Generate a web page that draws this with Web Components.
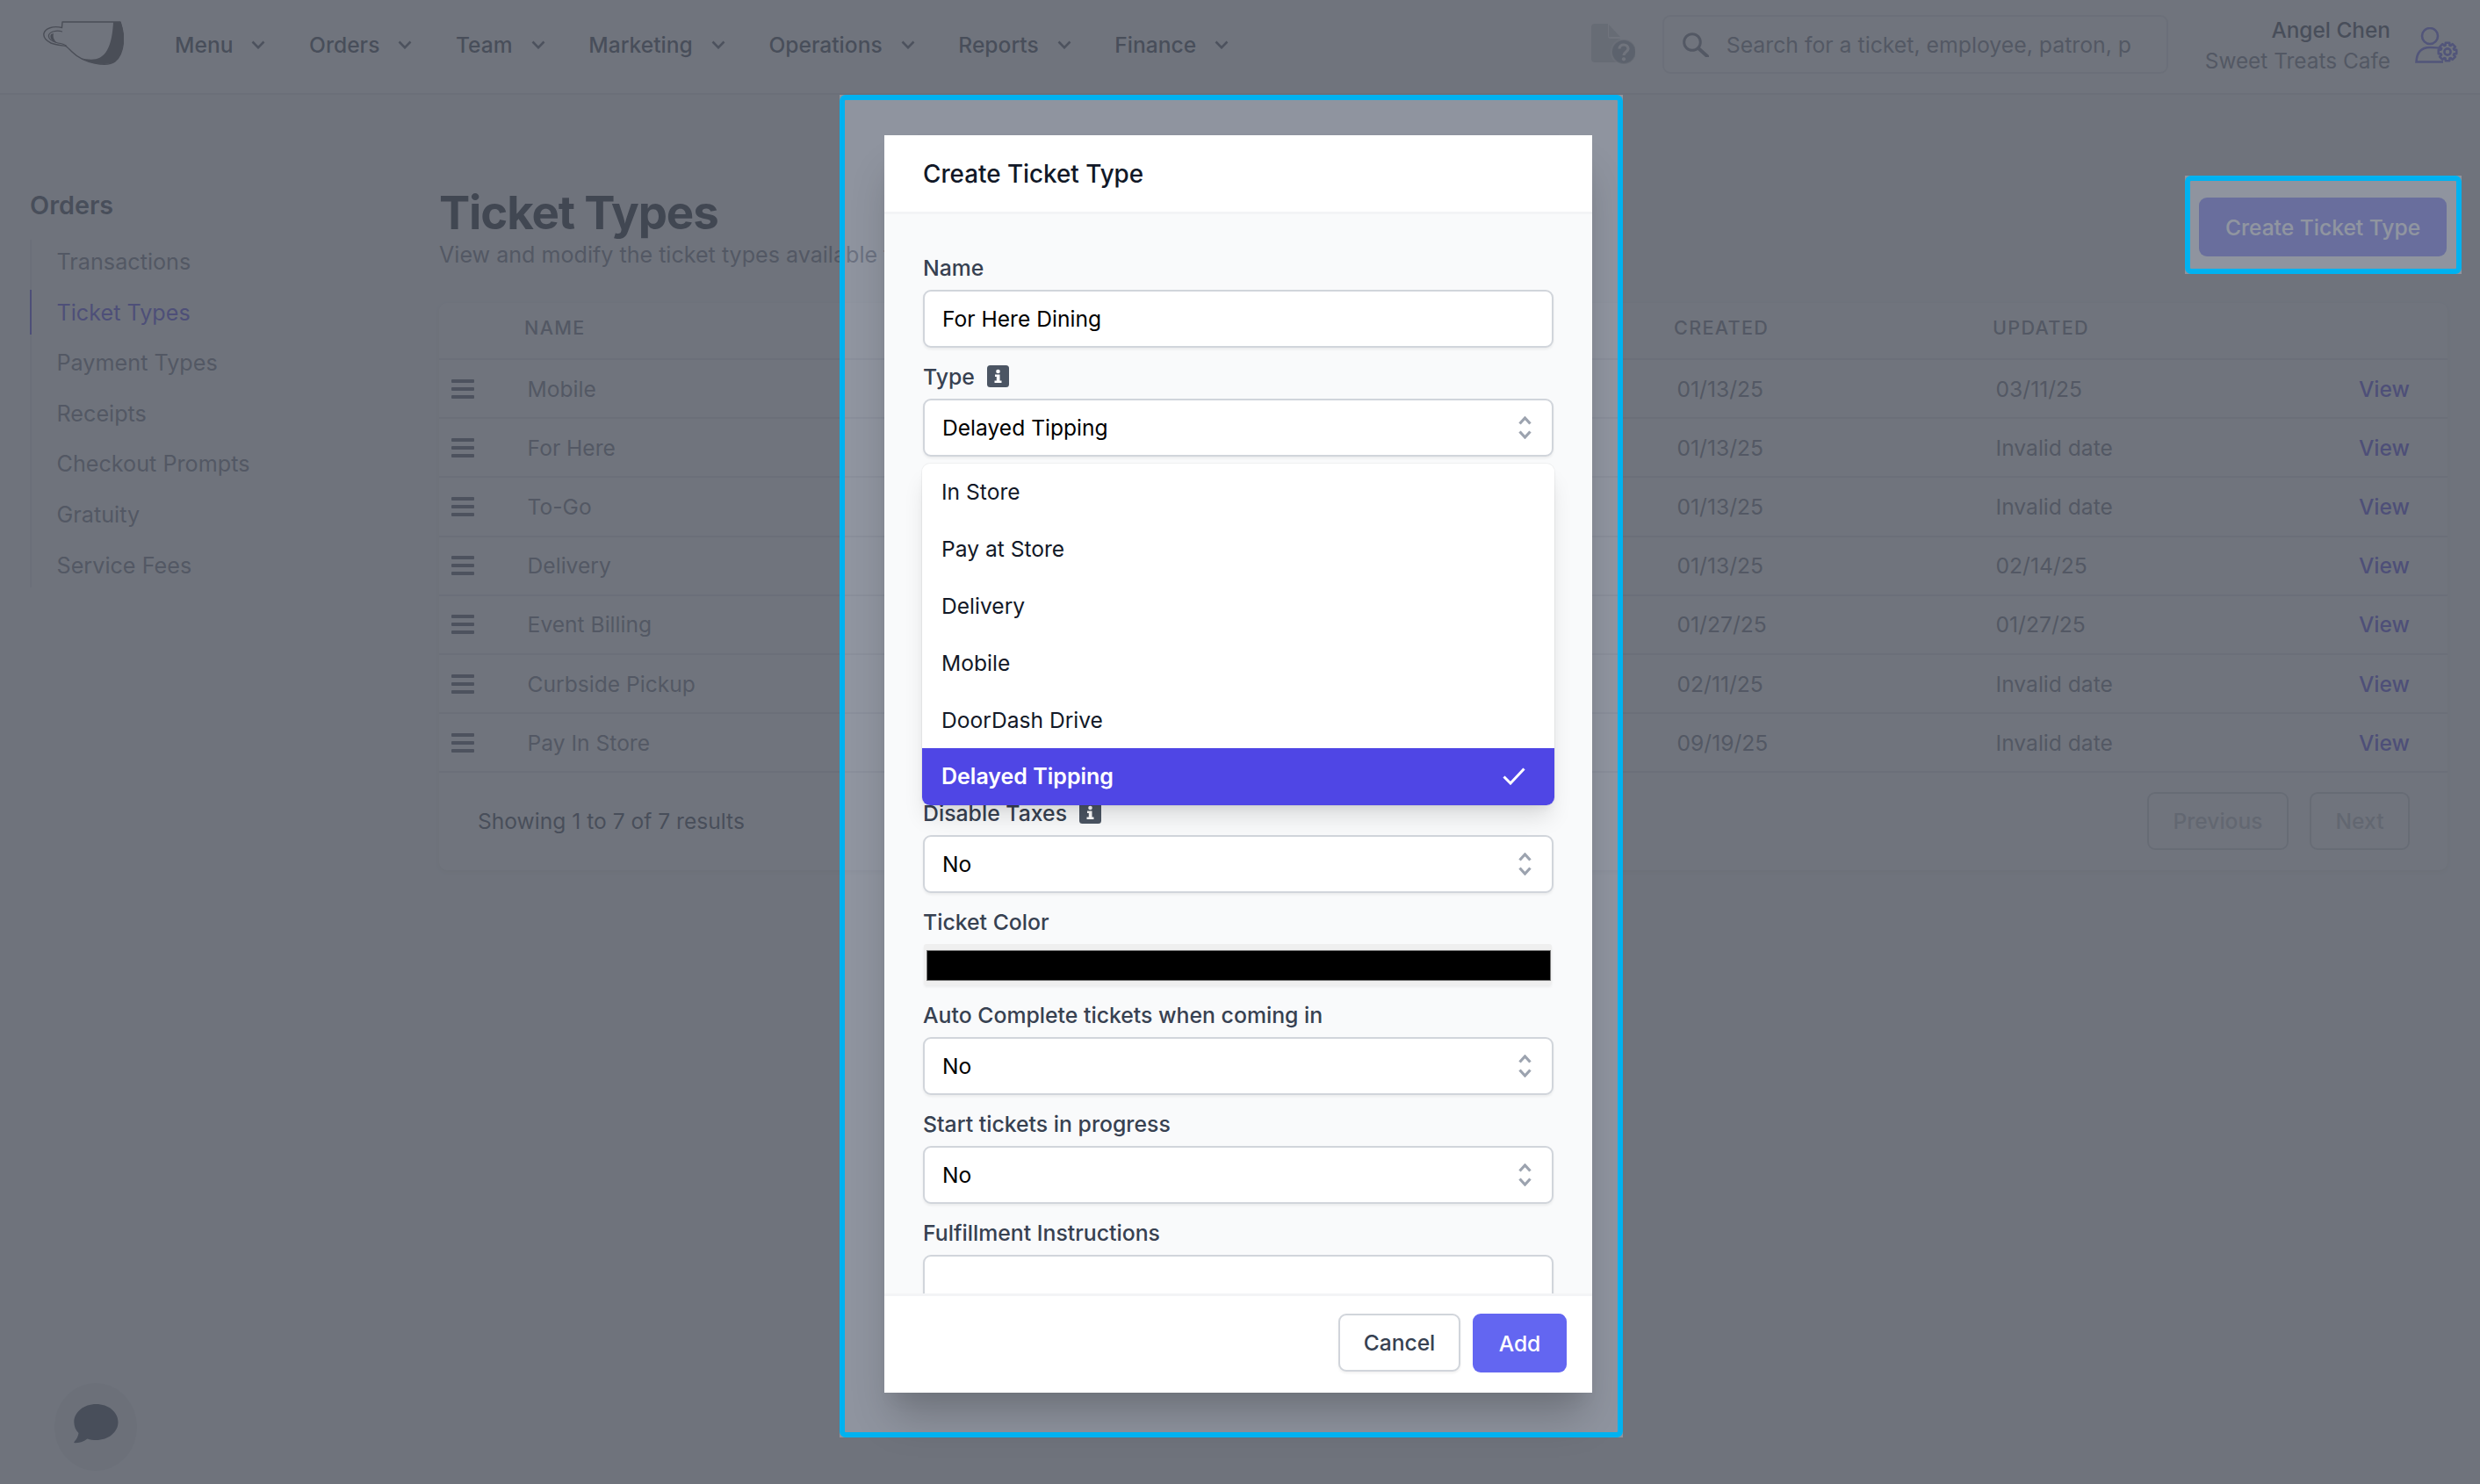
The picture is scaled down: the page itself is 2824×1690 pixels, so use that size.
<!DOCTYPE html>
<html lang="en">
<head>
<meta charset="utf-8">
<title>Ticket Types</title>
<style>
html,body{margin:0;padding:0;width:2824px;height:1690px;overflow:hidden;background:#f9fafb;font-family:Inter,"Liberation Sans",sans-serif;font-size:24.6px;}
</style>
</head>
<body>
<app-shell></app-shell>
<script>
const define=(name,html,extra={})=>{
  class C extends HTMLElement{
    constructor(){super();this.attachShadow({mode:'open'}).innerHTML=html;}
    connectedCallback(){
      if(extra.render) extra.render.call(this,this.shadowRoot);
    }
  }
  customElements.define(name,C);
};
function gear(cx,cy,ro,ri,n){
  let d='';
  for(let i=0;i<n;i++){
    const a=i*2*Math.PI/n, w=Math.PI/n*0.55, b=Math.PI/n*0.8;
    const p=[[ri,a-b],[ro,a-w],[ro,a+w],[ri,a+b]];
    p.forEach((q,j)=>{
      const x=(cx+q[0]*Math.cos(q[1])).toFixed(2), y=(cy+q[0]*Math.sin(q[1])).toFixed(2);
      d+=(i===0&&j===0?'M':'L')+x+' '+y+' ';
    });
  }
  return d+'Z';
}

define('nav-item',`<style>
:host{display:flex;align-items:center;gap:21px;font-weight:500;color:#374151;font-size:24.6px;line-height:36px;white-space:nowrap}
svg{width:16px;height:10px;display:block;margin-top:1px}
</style><slot></slot><svg viewBox="0 0 16 10"><path d="M1.5 1.5 8 8.2l6.5-6.7" fill="none" stroke="#4b5563" stroke-width="2.6"/></svg>`);

define('brand-logo',`<style>:host{display:block;width:92px;height:50px}svg{display:block}</style>
<svg width="92" height="50" viewBox="49 25 92 50">
<path d="M71 26H137C139 32 141 40 140.6 47 140 58 137 66 131 71 127 74 118 75 108 73 98 71 88 66 82 60 79 57 77 55 75 53.5 69 52.5 63 52 58 50 52 47 49 44 50 39 51.5 33.5 60 30 70.5 32.5Z" fill="none" stroke="#3f3d42" stroke-width="1.4" stroke-linejoin="round"/>
<path d="M129 26H137.5C139.5 32 141 40 140.6 47 140 58 137 66 131 71 127 74 118 75 108 73 103 72 97 70 92 67 100 69 108 69.5 114 66.5 124 61 128 46 129 26Z" fill="#3f3d42"/>
<path d="M71 37C64 35 57 37 55.5 41 54.5 45 60 49 66 50 72 51 74 52 75.5 53" fill="none" stroke="#3f3d42" stroke-width="1.2"/>
<path d="M58 40C56 44 59 48 65 50 61 46 60 43 61 39Z" fill="#3f3d42"/>
</svg>`);

define('help-icon',`<style>:host{display:block;width:50px;height:46px}svg{display:block}</style>
<svg width="50" height="46" viewBox="0 0 50 46">
<path d="M4 0H19V14C19 16 20 17 22 17H33V40C33 42.5 31 44 29 44H4C1.5 44 0 42.5 0 40V4C0 1.5 1.5 0 4 0Z" fill="#d1d5db"/>
<path d="M20 1 33 15H20Z" fill="#d1d5db"/>
<circle cx="37" cy="32" r="14" fill="#9ca3af" stroke="#fff" stroke-opacity=".55" stroke-width="2"/>
<path d="M32 28.5C32 25.5 34.5 24 37 24 40 24 42 26 42 28.5 42 32 37 32 37 36" fill="none" stroke="#fff" stroke-width="3.2"/>
<circle cx="37" cy="40.3" r="2.1" fill="#fff"/>
</svg>`);

define('search-box',`<style>
:host{display:flex;align-items:center;width:576px;height:67px;box-sizing:border-box;border:2px solid #e5e7eb;border-radius:9px;background:#fff;padding-left:21px;gap:20px;overflow:hidden}
svg{flex:none;display:block}
span{color:#6b7280;font-size:24.8px;white-space:nowrap;line-height:36px}
</style>
<svg width="30" height="28" viewBox="0 0 30 28"><circle cx="11" cy="11" r="9.3" fill="none" stroke="#6b7280" stroke-width="3"/><path d="M18 18 28 27" stroke="#6b7280" stroke-width="4" stroke-linecap="round"/></svg>
<span>Search for a ticket, employee, patron, p</span>`);

define('user-menu',`<style>
:host{display:flex;align-items:center;gap:28px;margin-top:2px}
.t{display:flex;flex-direction:column;align-items:flex-end;line-height:35px;font-size:24.4px;white-space:nowrap}
.n{color:#374151;font-weight:500}
.c{color:#6b7280}
svg{display:block}
</style>
<div class="t"><span class="n">Angel Chen</span><span class="c">Sweet Treats Cafe</span></div>
<svg width="50" height="42" viewBox="0 0 50 42" fill="none" stroke="#6366f1" stroke-width="2.6">
<circle cx="17" cy="10" r="9"/>
<path d="M31 24.5C27 23.3 23 23 17 23 8 23 2 28 1.5 39.5H32"/>
<path id="g" stroke-linejoin="round"/>
<circle cx="37" cy="28" r="3.6"/>
</svg>`,{render(r){r.getElementById('g').setAttribute('d',gear(37,28,10.5,7.8,8));}});

define('app-header',`<style>
:host{display:flex;align-items:center;box-sizing:border-box;height:108px;background:#fff;border-bottom:2px solid #e5e7eb;padding:0 24px 5px 49px;flex:none}
brand-logo{margin-top:-4px}
nav{display:flex;gap:49.6px;margin-left:58px}
.r{margin-left:auto;display:flex;align-items:center}
help-icon{margin-right:31px;margin-top:-1px}
search-box{margin-right:42px}
</style>
<brand-logo></brand-logo>
<nav><nav-item>Menu</nav-item><nav-item>Orders</nav-item><nav-item>Team</nav-item><nav-item>Marketing</nav-item><nav-item>Operations</nav-item><nav-item>Reports</nav-item><nav-item>Finance</nav-item></nav>
<div class="r"><help-icon></help-icon><search-box></search-box><user-menu></user-menu></div>`);

define('side-link',`<style>
:host{display:flex;align-items:center;height:51px;padding-left:29px;margin-left:-2.5px;border-left:2.5px solid transparent;color:#6b7280;font-size:25.2px;white-space:nowrap}
:host([active]){color:#4f46e5;border-left-color:#4f46e5}
</style><slot></slot>`);

define('side-bar',`<style>
:host{display:block;width:466px;padding:103px 0 0 34px;flex:none}
h2{margin:0 0 15.5px;font-size:28.8px;line-height:46px;font-weight:600;color:#374151}
.l{display:flex;flex-direction:column;gap:6.6px;border-left:2.5px solid #e5e7eb}
</style>
<h2>Orders</h2>
<div class="l">
<side-link>Transactions</side-link><side-link active>Ticket Types</side-link><side-link>Payment Types</side-link><side-link>Receipts</side-link><side-link>Checkout Prompts</side-link><side-link>Gratuity</side-link><side-link>Service Fees</side-link>
</div>`);

define('prim-button',`<style>
:host{display:flex;align-items:center;justify-content:center;box-sizing:border-box;height:67px;border-radius:9px;background:#6366f1;color:#fff;font-weight:500;font-size:24.6px;white-space:nowrap}
:host([light]){background:#fff;color:#374151;border:2px solid #d1d5db;box-shadow:0 2px 3px rgba(0,0,0,.06)}
:host([off]){background:#fff;color:#374151;border:2px solid #d1d5db}
:host([off]) ::slotted(*){opacity:.35}
</style><slot></slot>`);

const COLS='grid-template-columns:97px 1309px 363px 1fr';
define('table-head',`<style>
:host{display:grid;${COLS};align-items:center;height:65px;box-sizing:border-box;padding-bottom:8px;border-bottom:2px solid #e5e7eb;font-size:21.6px;font-weight:500;letter-spacing:1.3px;color:#6b7280}
div:empty{height:1px}
</style><div></div><div>NAME</div><div>CREATED</div><div>UPDATED</div>`);

define('table-row',`<style>
:host{display:grid;${COLS};align-items:center;height:67.2px;box-sizing:border-box;border-bottom:2px solid #e5e7eb;font-size:24.6px;color:#6b7280}
.h{padding-left:14px;height:22px}
.h svg{display:block}
.c{padding-left:3.6px;white-space:nowrap}
.v{display:flex;justify-content:flex-end;padding-right:43px;color:#4f46e5;font-weight:500}
</style>
<div class="h"><svg width="26" height="22" viewBox="0 0 26 22" fill="#4b5563"><rect width="26" height="4" y="0" rx="1"/><rect width="26" height="4" y="9" rx="1"/><rect width="26" height="4" y="18" rx="1"/></svg></div>
<div class="c" id="a"></div><div class="c" id="b"></div>
<div style="display:grid;grid-template-columns:1fr auto"><div class="c" id="d"></div><div class="v">View</div></div>`,{render(r){
  r.getElementById('a').textContent=this.getAttribute('name');
  r.getElementById('b').textContent=this.getAttribute('created');
  r.getElementById('d').textContent=this.getAttribute('updated');
}});

define('table-card',`<style>
:host{display:block;background:#fff;border-radius:9px;box-shadow:0 2px 5px rgba(0,0,0,.08);height:646px;overflow:hidden}
.f{display:flex;align-items:center;justify-content:space-between;height:109px;padding:0 43px 0 44px;font-size:24.6px;color:#374151}
.b{display:flex;gap:24px}
prim-button{height:66px}
.p{width:161px}.n{width:114px}
</style>
<table-head></table-head>
<table-row name="Mobile" created="01/13/25" updated="03/11/25"></table-row>
<table-row name="For Here" created="01/13/25" updated="Invalid date"></table-row>
<table-row name="To-Go" created="01/13/25" updated="Invalid date"></table-row>
<table-row name="Delivery" created="01/13/25" updated="02/14/25"></table-row>
<table-row name="Event Billing" created="01/27/25" updated="01/27/25"></table-row>
<table-row name="Curbside Pickup" created="02/11/25" updated="Invalid date"></table-row>
<table-row name="Pay In Store" created="09/19/25" updated="Invalid date"></table-row>
<div class="f"><span>Showing 1 to 7 of 7 results</span>
<div class="b"><prim-button off class="p"><span>Previous</span></prim-button><prim-button off class="n"><span>Next</span></prim-button></div></div>`);

define('main-panel',`<style>
:host{display:block;flex:1;padding:102px 37px 0 0;min-width:0}
.top{display:flex;justify-content:space-between;height:100px;margin-bottom:35px}
h1{margin:0;font-size:52.8px;letter-spacing:-1.15px;line-height:64.8px;font-weight:700;color:#111827}
p{margin:0;font-size:25.1px;line-height:36px;color:#6b7280;margin-top:-3px}
prim-button{width:282px;margin-top:15px;margin-right:1px}
</style>
<div class="top"><div><h1>Ticket Types</h1><p>View and modify the ticket types available to</p></div><prim-button>Create Ticket Type</prim-button></div>
<table-card></table-card>`);

define('chat-bubble',`<style>
:host{position:absolute;left:62px;top:1575px;width:94px;height:100px;border-radius:50%;background:#e9ebef;display:block}
svg{position:absolute;left:22px;top:24px}
</style>
<svg width="51" height="45" viewBox="0 0 51 45"><path d="M25.5 0C39.5 0 50.5 9 50.5 20.5 50.5 32 39.5 41 25.5 41 22 41 18.5 40.5 15.5 39.5 11 43 5 44.5 1 44.3 .2 44.2 0 43.5 .5 43 3 40 5 37 5.5 33 2 29.5 .3 25 .3 20.5 .3 9 11.5 0 25.5 0Z" fill="#374151"/></svg>`);

define('field-label',`<style>
:host{display:flex;align-items:center;gap:14px;height:36px;margin-bottom:7px;font-size:24.8px;font-weight:500;color:#374151;white-space:nowrap}
</style><slot></slot>`);

define('info-badge',`<style>:host{display:block;width:25px;height:25px;margin-top:-2px;flex:none}svg{display:block}</style>
<svg width="25" height="25" viewBox="0 0 25 25"><rect width="25" height="25" rx="3.5" fill="#4b5563"/><circle cx="12.5" cy="7" r="2.3" fill="#fff"/><path d="M9 10.5H14.5V17.5H16.5V20H8.5V17.5H10.8V13H9Z" fill="#fff"/></svg>`);

define('text-box',`<style>
:host{display:flex;align-items:center;box-sizing:border-box;height:66px;background:#fff;border:2px solid #d1d5db;border-radius:9px;padding:0 20px;font-size:24.6px;color:#000;box-shadow:0 2px 3px rgba(0,0,0,.06);white-space:nowrap}
</style><slot></slot>`);

define('select-box',`<style>
:host{display:flex;align-items:center;justify-content:space-between;box-sizing:border-box;height:66px;background:#fff;border:2px solid #d1d5db;border-radius:9px;padding:0 23px 0 20px;font-size:24.6px;color:#000;box-shadow:0 2px 3px rgba(0,0,0,.06);white-space:nowrap}
svg{display:block;flex:none}
</style><slot></slot>
<svg width="15" height="26" viewBox="0 0 15 26" fill="none" stroke="#9ca3af" stroke-width="3.2"><path d="M1.5 8.5 7.5 2l6 6.5"/><path d="M1.5 17.5 7.5 24l6-6.5"/></svg>`);

define('color-box',`<style>
:host{display:flex;box-sizing:border-box;height:47px;margin:0 2px 0 1px;padding:7px 1px 5px 3px;background:#efefef;border-radius:3px;box-shadow:0 2px 3px rgba(0,0,0,.06)}
div{flex:1;background:#000;border:1.5px solid #767676}
</style><div></div>`);

define('drop-item',`<style>
:host{display:flex;align-items:center;justify-content:space-between;box-sizing:border-box;height:64.8px;padding:0 33px 0 22px;font-size:24.6px;color:#111827;white-space:nowrap}
:host([sel]){background:#4f46e5;color:#fff;font-weight:600;font-size:25px}
svg{display:none}
:host([sel]) svg{display:block}
</style><slot></slot>
<svg width="26" height="20" viewBox="0 0 26 20" fill="none" stroke="#fff" stroke-width="3"><path d="M1.5 10.5 9 18 24.5 1.5"/></svg>`);

define('drop-menu',`<style>
:host{position:absolute;left:43px;top:374px;width:720px;border-radius:9px;background:#fff;overflow:hidden;display:block;box-shadow:0 18px 27px -5px rgba(0,0,0,.12),0 7px 11px -4px rgba(0,0,0,.06),0 0 0 1px rgba(0,0,0,.04)}
</style><slot></slot>`);

define('modal-card',`<style>
:host{position:absolute;left:1007px;top:154px;width:806px;height:1432px;background:#fff;box-shadow:0 36px 45px -9px rgba(0,0,0,.2),0 18px 18px -9px rgba(0,0,0,.05);display:flex;flex-direction:column}
.hd{flex:none;box-sizing:border-box;height:90px;border-bottom:3px solid #f3f4f6;padding:0 44px 0;display:flex;align-items:center;font-size:27.8px;font-weight:500;color:#111827}
.bd{flex:1;min-height:0;overflow:hidden;background:#f9fafb;padding:43px 44px 0;display:flex;flex-direction:column;gap:15px}
.bd>div{flex:none}
.sp{height:358px}
.ft{flex:none;box-sizing:border-box;height:113px;border-top:3px solid #f3f4f6;display:flex;justify-content:flex-end;gap:14px;padding:20px 29px 0 0}
.ca{width:139px;height:66px}.ad{width:107px}
</style>
<div class="hd">Create Ticket Type</div>
<div class="bd">
<div><field-label>Name</field-label><text-box>For Here Dining</text-box></div>
<div><field-label>Type <info-badge></info-badge></field-label><select-box>Delayed Tipping</select-box></div>
<div class="sp"></div>
<div><field-label>Disable Taxes <info-badge></info-badge></field-label><select-box>No</select-box></div>
<div><field-label>Ticket Color</field-label><color-box></color-box></div>
<div style="margin-top:1px"><field-label>Auto Complete tickets when coming in</field-label><select-box>No</select-box></div>
<div><field-label>Start tickets in progress</field-label><select-box>No</select-box></div>
<div><field-label>Fulfillment Instructions</field-label><text-box></text-box></div>
</div>
<div class="ft"><prim-button light class="ca">Cancel</prim-button><prim-button class="ad">Add</prim-button></div>
<drop-menu><drop-item>In Store</drop-item><drop-item>Pay at Store</drop-item><drop-item>Delivery</drop-item><drop-item>Mobile</drop-item><drop-item>DoorDash Drive</drop-item><drop-item sel>Delayed Tipping</drop-item></drop-menu>`);

define('hl-frame',`<style>
:host{position:absolute;box-sizing:border-box;border:6px solid #00b2f0;border-radius:7px;display:block;pointer-events:none}
</style>`);

define('app-shell',`<style>
:host{display:flex;flex-direction:column;position:relative;width:2824px;height:1690px;overflow:hidden;background:#f9fafb;font-family:Inter,"Liberation Sans",sans-serif}
.body{display:flex;flex:1;min-height:0}
.ov{position:absolute;inset:0;background:rgba(107,114,128,.75)}
.dim{position:absolute;inset:0;background:rgba(0,0,0,.22);clip-path:path(evenodd,"M0 0H2824V1690H0Z M956 108H1848V1637H956Z M2488 200H2803V312H2488Z")}
.f1{left:956px;top:108px;width:892px;height:1529px}
.f2{left:2488px;top:200px;width:315px;height:112px}
</style>
<app-header></app-header>
<div class="body"><side-bar></side-bar><main-panel></main-panel></div>
<chat-bubble></chat-bubble>
<div class="ov"></div>
<div class="dim"></div>
<modal-card></modal-card>
<hl-frame class="f1"></hl-frame>
<hl-frame class="f2"></hl-frame>`);
</script>
</body>
</html>
